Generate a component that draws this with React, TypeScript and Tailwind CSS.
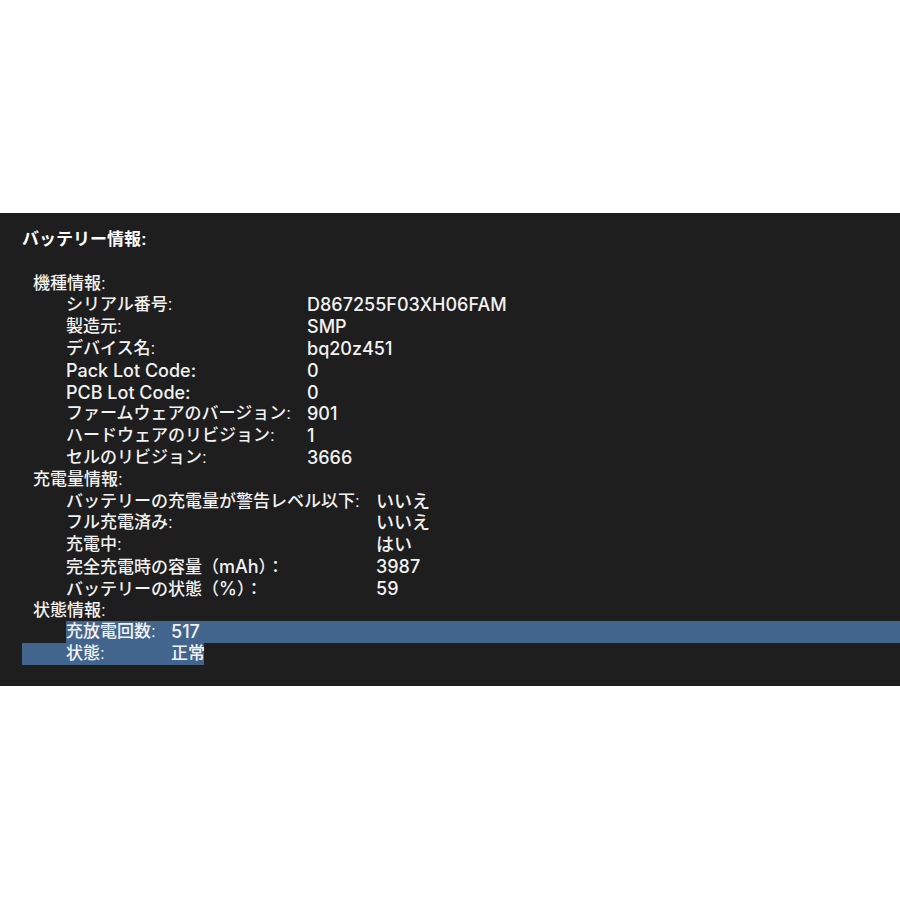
import React from 'react';

type Item = { label: React.ReactNode; value: React.ReactNode };

const latin = 'font-["Inter","Noto_Sans_CJK_JP",sans-serif] text-[18px]';

const L: React.FC<{ children: React.ReactNode }> = ({ children }) => (
  <span className={latin}>{children}</span>
);

const sections: { title: string; valueCol: string; items: Item[] }[] = [
  {
    title: '機種情報:',
    valueCol: 'w-[241px]',
    items: [
      { label: 'シリアル番号:', value: 'D867255F03XH06FAM' },
      { label: '製造元:', value: 'SMP' },
      { label: 'デバイス名:', value: 'bq20z451' },
      { label: <L>Pack Lot Code:</L>, value: '0' },
      { label: <L>PCB Lot Code:</L>, value: '0' },
      { label: 'ファームウェアのバージョン:', value: '901' },
      { label: 'ハードウェアのリビジョン:', value: '1' },
      { label: 'セルのリビジョン:', value: '3666' },
    ],
  },
  {
    title: '充電量情報:',
    valueCol: 'w-[310px]',
    items: [
      { label: 'バッテリーの充電量が警告レベル以下:', value: 'いいえ' },
      { label: 'フル充電済み:', value: 'いいえ' },
      { label: '充電中:', value: 'はい' },
      { label: <>完全充電時の容量（<L>mAh</L>）：</>, value: '3987' },
      { label: <>バッテリーの状態（<L>%</L>）：</>, value: '59' },
    ],
  },
];

const App: React.FC = () => {
  return (
    <div className="w-[900px] h-[900px] bg-white pt-[213px]">
      <div
        className="bg-[#1e1e1e] text-[#f2f2f2] text-[17px] font-medium leading-[21.8px] pt-[16px] pb-[21px]"
        style={{ fontFamily: '"Liberation Sans", "Noto Sans CJK JP", sans-serif' }}
      >
        <div className="h-[21.8px] pl-[22px] font-bold text-white">バッテリー情報:</div>
        <div className="h-[21.8px]" />

        {sections.map((section) => (
          <div key={section.title}>
            <div className="h-[21.8px] pl-[33px]">{section.title}</div>
            {section.items.map((item, i) => (
              <div key={i} className="h-[21.8px] flex pl-[66px] whitespace-nowrap">
                <div className={`${section.valueCol} shrink-0`}>{item.label}</div>
                <div className={latin}>{item.value}</div>
              </div>
            ))}
          </div>
        ))}

        {/* 状態情報 with selection highlight */}
        <div className="h-[21.8px] pl-[33px]">状態情報:</div>
        <div className="h-[21.8px] pl-[66px]">
          <div className="h-[21.8px] flex bg-[#42658d] whitespace-nowrap">
            <div className="w-[105px] shrink-0">充放電回数:</div>
            <div className={latin}>517</div>
          </div>
        </div>
        <div className="h-[21.8px] pl-[22px] flex">
          <div className="h-[21.8px] flex bg-[#42658d] whitespace-nowrap w-[182px]">
            <div className="w-[149px] shrink-0 pl-[44px]">状態:</div>
            <div>正常</div>
          </div>
        </div>
      </div>
    </div>
  );
};

export default App;
